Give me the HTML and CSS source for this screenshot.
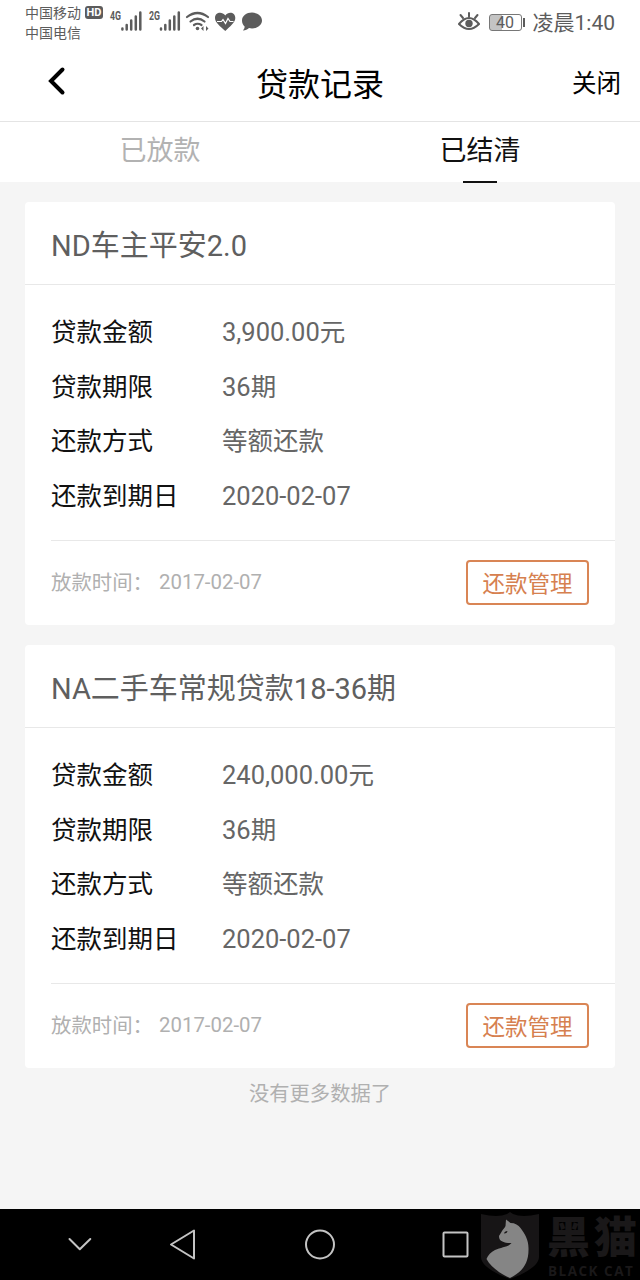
FILE: index.html
```html
<!DOCTYPE html>
<html lang="zh-CN">
<head>
    <meta charset="UTF-8">
    <meta name="viewport" content="width=device-width, initial-scale=1.0">
    <title>贷款记录</title>
    <link rel="stylesheet" href="styles.css">
</head>
<body>
    <div class="page">
        <div class="status-bar">
            <div class="carriers">
                <div class="carrier">中国移动 <span class="hd">HD</span></div>
                <div class="carrier">中国电信</div>
            </div>
            <svg class="status-icons" width="160" height="40" viewBox="106 0 160 40">
                <g fill="#5c5c5c">
                    <text class="net" x="110" y="20" textLength="11" lengthAdjust="spacingAndGlyphs">4G</text>
                    <text class="net" x="149" y="20" textLength="11" lengthAdjust="spacingAndGlyphs">2G</text>
                </g>
                <g stroke="#5c5c5c" stroke-width="2.5" stroke-linecap="round">
                    <path d="M122.4 28.5v1M126.7 25v4.5M131.2 20.5v9M135.8 16.5v13M140.3 12.5v17"/>
                    <path d="M161 28.5v1M165.3 25v4.5M169.8 20.5v9M174.3 16.5v13M178.8 12.5v17"/>
                </g>
                <g fill="none" stroke="#5c5c5c" stroke-width="2.2" stroke-linecap="round">
                    <path d="M187 17q10.500-8 21 0M190.500 21.500q7-5.500 14 0M194 25q3.500-2.500 7.500 0"/>
                </g>
                <circle cx="197.500" cy="28.500" r="1.800" fill="#5c5c5c"/>
                <path d="M201 28.500l2.500-2.500v5zM208.500 28.500l-2.500-2.500v5z" fill="#5c5c5c"/>
                <path d="M225.300 31C220 26 215 22.500 215 18c0-6 7-7 10.300-2.500 3-4.500 10-3.500 10 2.500 0 4.500-5 8-10 13z" fill="#5c5c5c"/>
                <path d="M217 21.500h4.500l1.500-2 2.500 4 2.500-5 2 3h3.500" fill="none" stroke="#fff" stroke-width="1.200"/>
                <path d="M252 12.500c5.500 0 10 3.500 10 8s-4.500 8-10 8c-1 0-2 0-3-.4-1.500 1.500-4 2.400-6 2.300 1-1 1.800-2.500 1.600-4-1.700-1.500-2.600-3.500-2.600-5.900 0-4.500 4.500-8 10-8z" fill="#5c5c5c"/>
            </svg>
            <div class="status-right">
                <svg width="22" height="20" viewBox="0 0 22 20" fill="none" stroke="#5c5c5c">
                    <path d="M1 12q10-12 20 0-10 10-20 0z" stroke-width="2"/>
                    <path d="M11 4.500V1M5 6L2.500 3M17 6l2.500-3" stroke-width="2" stroke-linecap="round"/>
                    <circle cx="11" cy="11.500" r="3.700" fill="#5c5c5c" stroke="none"/>
                </svg>
                <div class="battery"><span>40</span></div>
                <div class="time">凌晨1:40</div>
            </div>
        </div>

        <header class="nav">
            <svg class="back" width="20" height="32" viewBox="0 0 20 32">
                <path d="M15.500 4.500L4 16l11.500 11.500" fill="none" stroke="#000" stroke-width="4" stroke-linecap="round"/>
            </svg>
            <h1>贷款记录</h1>
            <a class="close">关闭</a>
        </header>

        <nav class="tabs">
            <div class="tab">已放款</div>
            <div class="tab active">已结清</div>
        </nav>

        <main class="list">
            <section class="card">
                <h2>ND车主平安2.0</h2>
                <dl class="info">
                    <dt>贷款金额</dt><dd>3,900.00元</dd>
                    <dt>贷款期限</dt><dd>36期</dd>
                    <dt>还款方式</dt><dd>等额还款</dd>
                    <dt>还款到期日</dt><dd>2020-02-07</dd>
                </dl>
                <div class="card-footer">
                    <span class="loan-time">放款时间：</span>
                    <span class="loan-date">2017-02-07</span>
                    <button>还款管理</button>
                </div>
            </section>

            <section class="card">
                <h2>NA二手车常规贷款18-36期</h2>
                <dl class="info">
                    <dt>贷款金额</dt><dd>240,000.00元</dd>
                    <dt>贷款期限</dt><dd>36期</dd>
                    <dt>还款方式</dt><dd>等额还款</dd>
                    <dt>还款到期日</dt><dd>2020-02-07</dd>
                </dl>
                <div class="card-footer">
                    <span class="loan-time">放款时间：</span>
                    <span class="loan-date">2017-02-07</span>
                    <button>还款管理</button>
                </div>
            </section>
            <p class="no-more">没有更多数据了</p>
        </main>

        <footer class="system-bar">
            <svg width="480" height="71" viewBox="0 1209 480 71">
                <g fill="none" stroke="#c4c4c4" stroke-width="2" stroke-linecap="round" stroke-linejoin="round">
                    <path d="M69.500 1239l10.300 10.300L90.300 1239"/>
                    <path d="M171 1244.500l23-14v28z"/>
                    <circle cx="320" cy="1244.500" r="14"/>
                    <rect x="443.500" y="1232.500" width="24" height="24" rx="1"/>
                </g>
            </svg>
            <!-- Black Cat badge -->
            <svg width="66" height="71" viewBox="480 1209 66 71">
                <path d="M481 1214q17 4 26 0l3-2 3 2q9 4 26 0v43c0 9-15 17-29 22-14-5-29-13-29-22z" fill="#171516"/>
                <path d="M506 1219.500L510.500 1223C515 1223 518.500 1225 520.500 1228C525 1234 528.500 1240 528.500 1248C529 1264 522 1272 510 1278C499 1273 491 1267 486.500 1259C488 1255 491 1252 495 1250C501 1247 508 1247.500 511.500 1243C508 1243 505 1243 502.500 1241.500C500 1240.500 499 1239 499 1236C500.500 1234 501 1232.500 502 1231C503 1229 505 1228 505.500 1226Z" fill="#858585"/>
                <path d="M504 1233.500q.5-2.500 3.500-2.500-.5 2.500-3.500 2.500z" fill="#171516"/>
            </svg>
            <div class="mark">
                <span class="mark-zh">黑猫</span>
                <span class="mark-en">BLACK CAT</span>
            </div>
        </footer>
    </div>
</body>
</html>
```
FILE: styles.css
```css
* {
    box-sizing: border-box;
    margin: 0;
    padding: 0;
}

body {
    font-family: Roboto, "Noto Sans CJK SC", sans-serif;
    background: #f5f5f5;
    color: #111;
}

.page {
    display: flex;
    flex-direction: column;
    width: 640px;
    height: 1280px;
    overflow: hidden;
}

/* Status bar */
.status-bar {
    display: flex;
    height: 44px;
    padding: 0 25px;
    background: #fff;
    color: #5c5c5c;
}

.carriers {
    width: 81px;
    padding-top: 2px;
    font-size: 14px;
    white-space: nowrap;
}

.carrier {
    display: flex;
    align-items: center;
    gap: 4px;
    height: 20px;
}

.hd {
    width: 18px;
    height: 13px;
    background: #5c5c5c;
    border-radius: 3px;
    color: #fff;
    font-size: 11px;
    font-weight: bold;
    line-height: 13px;
    text-align: center;
}

.status-icons {
    flex: none;
}

.net {
    font-size: 12px;
    font-weight: bold;
}

.status-right {
    display: flex;
    align-items: center;
    margin-left: auto;
}

.battery {
    position: relative;
    width: 33px;
    height: 17px;
    margin: 0 11px 0 9px;
    border: 1px solid #777;
    border-radius: 3px;
    background: linear-gradient(to right, #c4c4c4 12px, #fff 12px);
    font-size: 16px;
    line-height: 15px;
    text-align: center;
}

.battery::after {
    content: "";
    position: absolute;
    top: 3px;
    right: -4px;
    width: 2px;
    height: 9px;
    background: #5c5c5c;
}

.time {
    margin-top: -2px;
    font-size: 21px;
}

/* Title bar */
.nav {
    display: grid;
    grid-template-columns: 120px 1fr 120px;
    align-items: center;
    height: 78px;
    padding: 0 19px;
    background: #fff;
    border-bottom: 1px solid #e4e4e4;
    color: #000;
}

.back {
    margin: -3px 0 0 28px;
}

h1 {
    margin-top: -2px;
    font-size: 32px;
    font-weight: normal;
    text-align: center;
}

.close {
    margin-top: -2px;
    font-size: 24.5px;
    text-align: right;
}

/* Tabs */
.tabs {
    display: flex;
    height: 60px;
    background: #fff;
}

.tab {
    position: relative;
    flex: 1;
    color: #b2b2b2;
    font-size: 27px;
    line-height: 59px;
    text-align: center;
}

.tab.active {
    color: #111;
}

.tab.active::after {
    content: "";
    position: absolute;
    left: 143px;
    bottom: -1px;
    width: 34px;
    height: 2px;
    background: #111;
}

/* Loan cards */
.list {
    flex: 1;
    padding: 20px 25px 0 25px;
}

.card {
    height: 423px;
    margin-bottom: 20px;
    background: #fff;
    border-radius: 4px;
}

h2 {
    height: 83px;
    padding-left: 26px;
    border-bottom: 1px solid #e8e8e8;
    color: #5f5f5f;
    font-size: 29px;
    font-weight: normal;
    line-height: 88px;
}

.info {
    display: grid;
    grid-template-columns: 170px 1fr;
    grid-auto-rows: 54.5px;
    height: 256px;
    margin-left: 26px;
    padding-top: 19px;
    border-bottom: 1px solid #e8e8e8;
    font-size: 25.5px;
    line-height: 56px;
}

dd {
    padding-left: 1px;
    color: #666;
}

.card-footer {
    display: flex;
    align-items: center;
    height: 83px;
    padding: 0 26px;
    color: #b0b0b0;
    font-size: 20.4px;
}

.loan-time {
    width: 108px;
    margin-top: -3px;
}

.loan-date {
    margin-top: -2px;
}

button {
    width: 123px;
    height: 45px;
    margin-left: auto;
    padding-bottom: 2px;
    background: #fff;
    border: 2px solid #d98555;
    border-radius: 4px;
    color: #d6804f;
    font-family: inherit;
    font-size: 22.5px;
}

.no-more {
    margin-top: -11px;
    color: #b0b0b0;
    font-size: 20.3px;
    text-align: center;
}

/* System buttons */
.system-bar {
    display: flex;
    height: 71px;
    background: #000;
}

.system-bar svg {
    flex: none;
}

.mark {
    display: flex;
    flex-direction: column;
    width: 94px;
    padding-top: 8px;
    color: #1a1819;
    white-space: nowrap;
}

.mark-zh {
    height: 47px;
    padding-left: 1px;
    font-size: 43px;
    font-weight: 900;
    letter-spacing: 4px;
    line-height: 43px;
}

.mark-en {
    padding-left: 2px;
    font-family: "Open Sans", sans-serif;
    font-size: 13.5px;
    font-weight: bold;
    letter-spacing: 1.5px;
    line-height: 14px;
}
```
